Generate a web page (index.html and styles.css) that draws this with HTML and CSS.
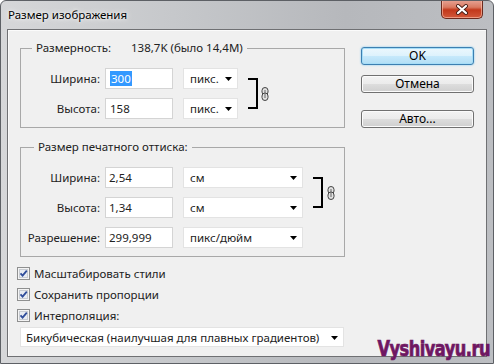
FILE: index.html
```html
<!DOCTYPE html>
<html lang="ru">
<head>
<meta charset="utf-8">
<title>Размер изображения</title>
<link rel="stylesheet" href="styles.css">
</head>
<body>
<div class="window">
  <div class="titlebar">
    <span class="title">Размер изображения</span>
    <div class="close">
      <svg width="14" height="11" viewBox="0 0 14 11">
        <path d="M3 2 L11 9 M11 2 L3 9" stroke="#4a2018" stroke-width="4" stroke-linecap="round"/>
        <path d="M3 2 L11 9 M11 2 L3 9" stroke="#ffffff" stroke-width="2.2" stroke-linecap="round"/>
      </svg>
    </div>
  </div>
  <div class="client">
    <div class="main">
      <div class="left">
        <div class="group g1">
          <div class="legend">Размерность:<span class="dim">138,7K (было 14,4M)</span></div>
          <div class="rows rows-px">
            <span class="label">Ширина:</span>
            <div class="input pad5"><span class="sel">300</span></div>
            <div class="select"><span>пикс.</span><svg class="arrow" width="7" height="4" viewBox="0 0 7 4"><polygon points="0,0 7,0 3.5,4" fill="#000"/></svg></div>
            <div class="bracket"></div>
            <svg class="chain" width="8" height="14" viewBox="0 0 8 14">
              <rect x="1" y="0.5" width="6" height="7.5" rx="3" fill="#e2e2e2" stroke="#444"/>
              <rect x="1" y="6" width="6" height="7.5" rx="3" fill="#e2e2e2" stroke="#444"/>
              <line x1="4" y1="3" x2="4" y2="11" stroke="#666" stroke-width="1"/>
            </svg>
            <span class="label">Высота:</span>
            <div class="input pad5">158</div>
            <div class="select"><span>пикс.</span><svg class="arrow" width="7" height="4" viewBox="0 0 7 4"><polygon points="0,0 7,0 3.5,4" fill="#000"/></svg></div>
          </div>
        </div>
        <div class="group g2">
          <div class="legend">Размер печатного оттиска:</div>
          <div class="rows rows-print">
            <span class="label">Ширина:</span>
            <div class="input">2,54</div>
            <div class="select"><span>см</span><svg class="arrow" width="7" height="4" viewBox="0 0 7 4"><polygon points="0,0 7,0 3.5,4" fill="#000"/></svg></div>
            <div class="bracket"></div>
            <svg class="chain" width="8" height="14" viewBox="0 0 8 14">
              <rect x="1" y="0.5" width="6" height="7.5" rx="3" fill="#e2e2e2" stroke="#444"/>
              <rect x="1" y="6" width="6" height="7.5" rx="3" fill="#e2e2e2" stroke="#444"/>
              <line x1="4" y1="3" x2="4" y2="11" stroke="#666" stroke-width="1"/>
            </svg>
            <span class="label">Высота:</span>
            <div class="input">1,34</div>
            <div class="select"><span>см</span><svg class="arrow" width="7" height="4" viewBox="0 0 7 4"><polygon points="0,0 7,0 3.5,4" fill="#000"/></svg></div>
            <span class="label">Разрешение:</span>
            <div class="input">299,999</div>
            <div class="select"><span>пикс/дюйм</span><svg class="arrow" width="7" height="4" viewBox="0 0 7 4"><polygon points="0,0 7,0 3.5,4" fill="#000"/></svg></div>
          </div>
        </div>
      </div>
      <div class="buttons">
        <div class="btn btn-default">OK</div>
        <div class="btn btn-cancel">Отмена</div>
        <div class="btn btn-auto">Авто...</div>
      </div>
    </div>
    <div class="checks">
      <div class="check"><svg class="cb" width="13" height="13" viewBox="0 0 13 13"><rect x="0.5" y="0.5" width="12" height="12" fill="#f4f4f4" stroke="#8e8f8f"/><rect x="2.5" y="2.5" width="8" height="8" fill="#e8ecf2" stroke="#c8ccd2"/><path d="M3.5 6.3 L5.6 8.6 L9.8 3.6" fill="none" stroke="#2f4d9a" stroke-width="1.8"/></svg><span>Масштабировать стили</span></div>
      <div class="check"><svg class="cb" width="13" height="13" viewBox="0 0 13 13"><rect x="0.5" y="0.5" width="12" height="12" fill="#f4f4f4" stroke="#8e8f8f"/><rect x="2.5" y="2.5" width="8" height="8" fill="#e8ecf2" stroke="#c8ccd2"/><path d="M3.5 6.3 L5.6 8.6 L9.8 3.6" fill="none" stroke="#2f4d9a" stroke-width="1.8"/></svg><span>Сохранить пропорции</span></div>
      <div class="check"><svg class="cb" width="13" height="13" viewBox="0 0 13 13"><rect x="0.5" y="0.5" width="12" height="12" fill="#f4f4f4" stroke="#8e8f8f"/><rect x="2.5" y="2.5" width="8" height="8" fill="#e8ecf2" stroke="#c8ccd2"/><path d="M3.5 6.3 L5.6 8.6 L9.8 3.6" fill="none" stroke="#2f4d9a" stroke-width="1.8"/></svg><span>Интерполяция:</span></div>
    </div>
    <div class="select wide"><span>Бикубическая (наилучшая для плавных градиентов)</span><svg class="arrow" width="7" height="4" viewBox="0 0 7 4"><polygon points="0,0 7,0 3.5,4" fill="#000"/></svg></div>
  </div>
  <div class="watermark">Vyshivayu.ru</div>
</div>
</body>
</html>
```
FILE: styles.css
```css
html, body {
  margin: 0;
  padding: 0;
}
body {
  width: 494px;
  height: 364px;
  overflow: hidden;
  font-family: "Noto Sans", "Open Sans", sans-serif;
  font-size: 11.5px;
  color: #222;
}
.window {
  position: relative;
  width: 494px;
  height: 364px;
  box-sizing: border-box;
  border: 1px solid #5d6065;
  border-radius: 6px 6px 0 0;
  background: linear-gradient(90deg, #d6d7d9 0%, #c6c8cb 35%, #b6b8bc 70%, #bcbec2 100%);
  display: flex;
  flex-direction: column;
  overflow: hidden;
}
.titlebar {
  height: 28px;
  flex: none;
  display: flex;
  align-items: flex-start;
}
.title {
  margin: 6px 0 0 7px;
  line-height: 16px;
  color: #000;
  text-shadow: 0 0 6px #f4f4f4, 0 0 3px #ffffff;
}
.close {
  margin: -1px 10px 0 auto;
  width: 42px;
  height: 19px;
  box-sizing: border-box;
  border: 1px solid #6b2a1e;
  border-top: none;
  border-radius: 0 0 5px 5px;
  background: linear-gradient(180deg, #e7a596 0%, #d97a62 40%, #c2381b 55%, #d2583a 100%);
  box-shadow: inset 0 0 0 1px rgba(255, 200, 180, 0.6);
  display: flex;
  align-items: center;
  justify-content: center;
}
.client {
  flex: none;
  height: 328px;
  margin: 0 6px;
  box-sizing: border-box;
  border: 1px solid #6f7073;
  background: #f0f0f0;
  box-shadow: inset 1px 1px 0 #fbfbfb;
}
.main {
  display: flex;
}
.left {
  width: 325px;
  margin-left: 12px;
  padding-top: 18px;
}
.group {
  border: 1px solid #a8a8a8;
  padding-bottom: 8px;
}
.g2 {
  margin-top: 19px;
}
.legend {
  width: max-content;
  height: 16px;
  line-height: 16px;
  margin: -9px 0 0 11px;
  padding: 0 4px;
  background: #f0f0f0;
}
.g2 .legend {
  margin-left: 13px;
}
.dim {
  margin-left: 20px;
}
.rows {
  display: grid;
  margin-top: 12px;
  column-gap: 10px;
  row-gap: 9px;
  grid-auto-rows: 21px;
  align-items: stretch;
}
.rows-px {
  grid-template-columns: 74px 68px 55px 10px 8px;
}
.rows-print {
  grid-template-columns: 74px 68px 120px 10px 8px;
}
.label {
  text-align: right;
  margin-right: -5px;
  line-height: 21px;
  white-space: nowrap;
}
.input {
  box-sizing: border-box;
  height: 21px;
  border: 1px solid #d4d4d4;
  background: #fff;
  padding-left: 3px;
  line-height: 19px;
}
.pad5 {
  padding-left: 4px;
}
.sel {
  background: #3399ff;
  color: #fff;
  padding: 0 1px;
}
.select {
  box-sizing: border-box;
  height: 21px;
  border: 1px solid #e3e3e3;
  background: #fff;
  padding: 0 5px 0 6px;
  display: flex;
  align-items: center;
  justify-content: space-between;
  white-space: nowrap;
}
.arrow {
  flex: none;
  margin-top: 1px;
}
.bracket {
  grid-row: 1 / 3;
  grid-column: 4;
  margin: 10px 0;
  border: 2px solid #000;
  border-left: none;
}
.chain {
  grid-row: 1 / 3;
  grid-column: 5;
  align-self: center;
  margin-left: -7px;
}
.rows-print .chain {
  margin-left: -6px;
}
.buttons {
  width: 113px;
  margin-left: 16px;
  padding-top: 17px;
  display: flex;
  flex-direction: column;
}
.btn {
  box-sizing: border-box;
  height: 18px;
  border: 1px solid #707070;
  border-radius: 3px;
  background: linear-gradient(180deg, #f3f3f3 0%, #ebebeb 50%, #dddddd 51%, #cfcfcf 100%);
  box-shadow: inset 0 0 0 1px #fbfbfb;
  text-align: center;
  line-height: 16px;
  font-size: 12px;
  color: #000;
}
.btn-default {
  border-color: #3c7fb1;
  background: linear-gradient(180deg, #ecf7fd 0%, #ddf2fc 50%, #c6e9fb 51%, #b2def5 100%);
  box-shadow: inset 0 0 0 1px #a6ddf7, 0 0 2px #6cc0ef;
}
.btn-cancel {
  margin-top: 10px;
}
.btn-auto {
  margin-top: 17px;
}
.checks {
  margin-top: 6px;
  padding-left: 9px;
}
.check {
  height: 21px;
  display: flex;
  align-items: center;
  gap: 4px;
}
.cb {
  flex: none;
}
.wide {
  width: 324px;
  height: 20px;
  margin: 1px 0 0 12px;
  padding-left: 5px;
}
.watermark {
  position: absolute;
  right: 3px;
  bottom: 3px;
  font-family: "DejaVu Sans Condensed", "DejaVu Sans", sans-serif;
  font-weight: bold;
  font-size: 18px;
  line-height: 18px;
  letter-spacing: -0.5px;
  color: #6f1762;
  -webkit-text-stroke: 0.6px #6f1762;
  transform: scaleY(1.2);
  transform-origin: bottom right;
}
```
